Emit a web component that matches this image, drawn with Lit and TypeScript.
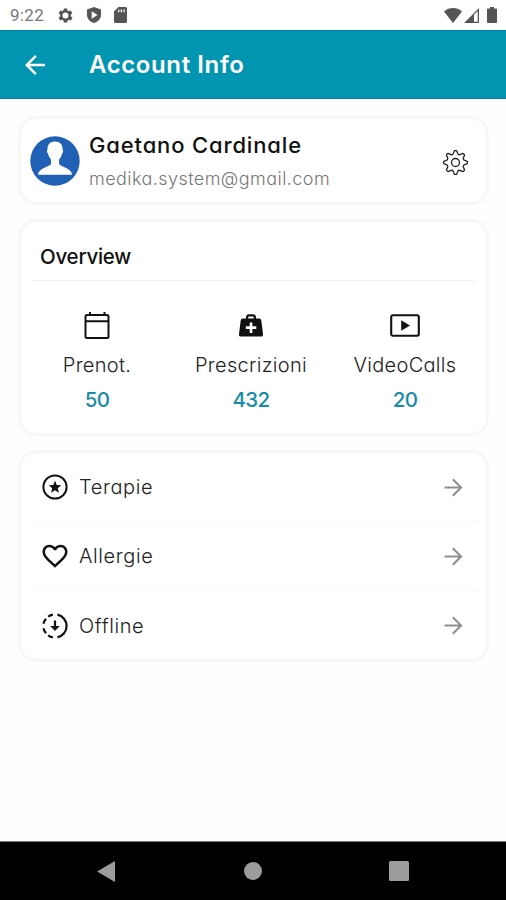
import { LitElement, html, css, svg } from "lit";
import { customElement } from "lit/decorators.js";

const gearPath = (() => {
  const pts: string[] = [];
  const n = 8;
  const at = (r: number, deg: number) => {
    const t = ((deg - 90) * Math.PI) / 180;
    return `${(12.5 + r * Math.cos(t)).toFixed(2)} ${(12.5 + r * Math.sin(t)).toFixed(2)}`;
  };
  for (let i = 0; i < n; i++) {
    const a = (i * 360) / n;
    pts.push(
      `${i ? "L" : "M"}${at(9, a - 15)}L${at(11.7, a - 6)}Q${at(12.2, a)} ${at(11.7, a + 6)}L${at(9, a + 15)}Q${at(8.2, a + 22.5)} ${at(9, a + 30)}`
    );
  }
  return pts.join("") + "Z";
})();

const icon = (w: number, h: number, box: string, body: unknown) =>
  html`<svg width=${w} height=${h} viewBox=${box} fill="currentColor">${body}</svg>`;

const icons = {
  gearSmall: icon(17, 17, "0 0 24 24", svg`<path fill-rule="evenodd" d="M19.4 13a7.500 7.500 0 0 0 0-2l2.100-1.700a.5.5 0 0 0 .1-.6l-2-3.500a.5.5 0 0 0-.6-.2l-2.500 1a7.300 7.300 0 0 0-1.700-1l-.4-2.600A.5.5 0 0 0 14 2h-4a.5.5 0 0 0-.5.4L9.100 5a7.700 7.700 0 0 0-1.700 1L5 5a.5.5 0 0 0-.6.2l-2 3.500a.5.5 0 0 0 .1.6L4.600 11a8 8 0 0 0 0 2l-2.100 1.700a.5.5 0 0 0-.1.6l2 3.500c.1.2.4.3.6.2l2.500-1a7.300 7.300 0 0 0 1.700 1l.4 2.600c0 .2.2.4.5.4h4c.2 0 .5-.2.5-.4l.4-2.600a7.700 7.700 0 0 0 1.700-1l2.500 1c.2.1.5 0 .6-.2l2-3.500a.5.5 0 0 0-.1-.6zM12 16.200a4.200 4.200 0 1 1 0-8.400 4.200 4.200 0 0 1 0 8.400z"/>`),
  shield: icon(14, 16, "0 0 14 16", svg`<path fill-rule="evenodd" d="M7 0L0 2.600V8c0 3.700 3 6.800 7 8 4-1.200 7-4.300 7-8V2.600zM4.700 4.300v7.400L10.500 8z"/>`),
  sd: icon(13, 16, "0 0 13 16", svg`<path fill-rule="evenodd" d="M4.300 0L0 4.600V14.500C0 15.400.6 16 1.500 16h10c.9 0 1.500-.6 1.500-1.500v-13C13 .6 12.400 0 11.500 0zM4 2.500h1.300v2.800H4zm2.700 0H8v2.800H6.700zm2.700 0h1.300v2.800H9.400z"/>`),
  wifi: icon(18, 15, "0 0 18 15", svg`<path d="M9 15L0 3.500C5-1.100 13-1.100 18 3.500z"/>`),
  signal: icon(15, 15, "0 0 15 15", svg`<path d="M15 0v15H0zM13.700 3.100L10 6.800v6.900h3.700z" fill-rule="evenodd"/>`),
  battery: icon(10, 16, "0 0 10 16", svg`<path d="M3 0h4v1.600h2c.6 0 1 .4 1 1V15c0 .6-.4 1-1 1H1c-.6 0-1-.4-1-1V2.600c0-.6.4-1 1-1h2z"/>`),
  back: icon(30, 30, "0 0 24 24", svg`<path d="M20 11H7.830l5.590-5.590L12 4l-8 8 8 8 1.410-1.410L7.830 13H20z"/>`),
  gear: icon(25, 25, "0 0 25 25", svg`<g fill="none" stroke="currentColor" stroke-width="1.300" stroke-linejoin="round"><path d=${gearPath}/><circle cx="12.500" cy="12.500" r="4"/></g>`),
  calendar: icon(26, 28, "0 0 26 28", svg`<path fill="none" stroke="currentColor" stroke-width="2" d="M3 4h20a1.500 1.500 0 0 1 1.500 1.500v20A1.500 1.500 0 0 1 23 27H3a1.500 1.500 0 0 1-1.500-1.500v-20A1.500 1.500 0 0 1 3 4zM1.500 10.200h23M6 1v3M20.500 1v3"/>`),
  medkit: icon(24, 23, "0 0 24 23", svg`<path fill-rule="evenodd" d="M7 4.500V3.200C7 1.400 8.200.3 10 .3h4c1.800 0 3 1.100 3 2.900v1.300h3c1.400 0 2 .7 2.300 2L24 20c.2 1.600-.5 2.500-2 2.500H2c-1.500 0-2.200-.9-2-2.500L1.700 6.500c.3-1.300.9-2 2.300-2zm2.200 0h5.600V3.400c0-.7-.4-1-1-1h-3.600c-.6 0-1 .3-1 1zM10.700 8.500v3.800H6.800v2.800h3.900V19h2.700v-3.900h3.900v-2.800h-3.900V8.500z"/>`),
  video: icon(30, 23, "0 0 30 23", svg`<rect x="1.200" y="1.200" width="27.600" height="20.600" rx="1.700" fill="none" stroke="currentColor" stroke-width="2.100"/><path d="M11.200 6.200v10.600l8.800-5.300z"/>`),
  stars: icon(26, 26, "0 0 26 26", svg`<circle cx="13" cy="13" r="11.600" fill="none" stroke="currentColor" stroke-width="2"/><path d="M13 6.600l1.700 4.300 4.600.3-3.500 3 1.100 4.500-3.900-2.500-3.900 2.500 1.100-4.500-3.500-3 4.600-.3z"/>`),
  heart: icon(30, 30, "0 0 24 24", svg`<path d="M16.500 3c-1.740 0-3.410.81-4.500 2.090C10.910 3.810 9.240 3 7.500 3 4.420 3 2 5.420 2 8.500c0 3.780 3.400 6.860 8.550 11.540L12 21.350l1.450-1.320C18.600 15.360 22 12.280 22 8.500 22 5.420 19.580 3 16.500 3zm-4.400 15.550l-.1.1-.1-.1C7.140 14.240 4 11.390 4 8.500 4 6.500 5.500 5 7.500 5c1.540 0 3.040.99 3.570 2.360h1.870C13.460 5.990 14.960 5 16.500 5c2 0 3.500 1.500 3.500 3.500 0 2.890-3.140 5.740-7.900 10.050z"/>`),
  offline: icon(26, 26, "0 0 26 26", svg`<path fill="none" stroke="currentColor" stroke-width="2.200" d="M15.400 1.650A11.600 11.600 0 0 1 15.400 24.350M10.900 1.600A11.600 11.600 0 0 0 6.200 3.600M4 5.700A11.600 11.600 0 0 0 1.500 10.800M1.500 15.200A11.600 11.600 0 0 0 4 20.300M6.200 22.400A11.600 11.600 0 0 0 10.900 24.400"/><path d="M11.900 7.500h2.200v5.600h3.700L13 18l-4.800-4.900h3.700z"/>`),
  forward: icon(27, 27, "0 0 24 24", svg`<path d="M12 4l-1.300 1.300 5.800 5.750H4v1.900h12.500l-5.800 5.750L12 20l8-8z"/>`),
  avatar: icon(50, 50, "0 0 50 50", svg`<circle cx="25" cy="25" r="24.700" fill="#2161b5"/><path fill="#fff" d="M25 5.500c5 0 7.800 3 7.600 8.200.9.500.7 3-.6 4.100-.5 2.700-1.500 4.200-2.900 5.600v4.700c1 2.600 12.300 3.600 13 10.700H8c.7-7.100 12-8.100 13-10.700v-4.700c-1.400-1.400-2.400-2.900-2.900-5.600-1.300-1.100-1.500-3.600-.6-4.100C17.300 8.500 20 5.500 25 5.500z"/>`),
};

@customElement("app-root")
export class AppRoot extends LitElement {
  static styles = css`
    :host {
      display: flex;
      flex-direction: column;
      height: 900px;
      background: #fefefe;
      color: #111;
      font-family: Inter, "Open Sans", sans-serif;
      font-feature-settings: "cv11";
      white-space: nowrap;
    }
    svg { display: block; flex: none; }
    .status {
      box-sizing: border-box;
      height: 30px;
      padding: 0 9px 0 10px;
      display: flex;
      align-items: center;
      color: #555;
      background: #fff;
    }
    .clock { font: 400 17px Roboto, sans-serif; color: #777; width: 47px; letter-spacing: 0.3px; }
    .left { display: flex; align-items: center; gap: 13px; }
    .right { margin-left: auto; display: flex; align-items: center; }
    .sig { margin: 0 8px 0 2px; }
    .bar {
      box-sizing: border-box;
      height: 69px;
      padding-left: 20px;
      display: flex;
      align-items: center;
      color: #fff;
      background: #0295b1;
      border-top: 1px solid #087f98;
      border-bottom: 1px solid #087f98;
    }
    .title { margin-left: 39px; font-size: 24px; font-weight: 600; letter-spacing: 0.6px; }
    main { flex: 1; padding: 17px 17px 0 18px; display: flex; flex-direction: column; gap: 14px; }
    .card {
      box-sizing: border-box;
      border: 3px solid #f7f7f7;
      border-radius: 18px;
      background: #fff;
    }
    .profile { height: 89px; display: flex; align-items: center; padding: 0 18px 0 9px; }
    .who { flex: 1; margin: 3px 0 0 9px; display: flex; flex-direction: column; }
    .name { font-size: 22px; line-height: 32px; font-weight: 500; letter-spacing: 0.85px; }
    .mail { font-size: 18px; line-height: 35px; font-weight: 300; color: #777; letter-spacing: 0.44px; }
    .gear { color: #222; padding-top: 3px; }
    .overview { height: 217px; padding: 0 10px 0 11px; }
    .heading {
      height: 59px;
      box-sizing: border-box;
      padding: 12px 0 0 8px;
      font-size: 20.5px;
      line-height: 45px;
      font-weight: 450;
      letter-spacing: -0.25px;
      border-bottom: 1px solid #f2f2f2;
    }
    .stats { display: grid; grid-template-columns: repeat(3, 154px); margin-left: -12px; }
    .stat { display: flex; flex-direction: column; align-items: center; }
    .glyph { height: 30px; margin-top: 29px; display: flex; align-items: center; }
    .label {
      margin-top: 9px;
      font-size: 20px;
      line-height: 32px;
      font-weight: 300;
      color: #222;
      letter-spacing: 0.3px;
    }
    .value {
      margin-top: 3px;
      font-size: 20.5px;
      line-height: 32px;
      font-weight: 500;
      color: #168ca8;
      letter-spacing: -0.6px;
    }
    .list { height: 212px; padding: 0 8px 0 10px; }
    .row {
      box-sizing: border-box;
      height: 69px;
      padding: 0 11px 0 9px;
      display: flex;
      align-items: center;
      border-bottom: 1px solid #fafafa;
    }
    .row:last-child { border: 0; }
    .lead { width: 30px; display: flex; justify-content: center; }
    .text {
      flex: 1;
      margin-left: 9px;
      font-size: 20px;
      font-weight: 300;
      color: #222;
      letter-spacing: 0.6px;
    }
    .go { color: #8e8e8e; }
    .nav {
      box-sizing: border-box;
      height: 59px;
      background: #000;
      border-top: 1px solid #777;
      padding: 0 97px 0;
      display: grid;
      grid-template-columns: 18px 1fr 20px;
      justify-items: center;
      align-items: center;
      color: #9c9c9c;
    }
    .home { padding-left: 2px; }
  `;

  stats = [
    { icon: icons.calendar, label: "Prenot.", value: 50 },
    { icon: icons.medkit, label: "Prescrizioni", value: 432 },
    { icon: icons.video, label: "VideoCalls", value: 20 },
  ];

  rows = [
    { icon: icons.stars, label: "Terapie" },
    { icon: icons.heart, label: "Allergie" },
    { icon: icons.offline, label: "Offline" },
  ];

  render() {
    return html`
      <div class="status">
        <span class="clock">9:22</span>
        <div class="left">${icons.gearSmall}${icons.shield}${icons.sd}</div>
        <div class="right">${icons.wifi}<span class="sig">${icons.signal}</span>${icons.battery}</div>
      </div>
      <header class="bar">${icons.back}<span class="title">Account Info</span></header>
      <main>
        <section class="card profile">
          ${icons.avatar}
          <div class="who">
            <span class="name">Gaetano Cardinale</span>
            <span class="mail">medika.system@gmail.com</span>
          </div>
          <span class="gear">${icons.gear}</span>
        </section>
        <section class="card overview">
          <div class="heading">Overview</div>
          <div class="stats">
            ${this.stats.map(
              (s) => html`<div class="stat">
                <span class="glyph">${s.icon}</span>
                <span class="label">${s.label}</span>
                <span class="value">${s.value}</span>
              </div>`
            )}
          </div>
        </section>
        <section class="card list">
          ${this.rows.map(
            (r) => html`<div class="row">
              <span class="lead">${r.icon}</span>
              <span class="text">${r.label}</span>
              <span class="go">${icons.forward}</span>
            </div>`
          )}
        </section>
      </main>
      <nav class="nav">
        ${icon(18, 21, "0 0 18 21", svg`<path d="M18 0v21L0 10.500z"/>`)}
        <span class="home">${icon(18, 18, "0 0 18 18", svg`<circle cx="9" cy="9" r="9"/>`)}</span>
        ${icon(20, 20, "0 0 20 20", svg`<rect width="20" height="20" rx="1.500"/>`)}
      </nav>
    `;
  }
}
